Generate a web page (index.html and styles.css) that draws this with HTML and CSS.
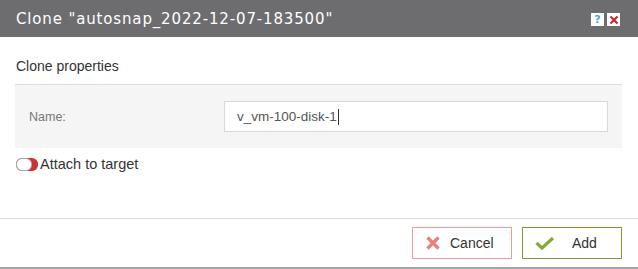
FILE: index.html
```html
<!DOCTYPE html>
<html>
<head>
<meta charset="utf-8">
<link rel="stylesheet" href="styles.css">
</head>
<body>
<div class="dialog">
  <div class="titlebar">
    <span class="title">Clone "autosnap_2022-12-07-183500"</span>
    <div class="tools">
      <span class="tool help">?</span>
      <span class="tool close">
        <svg width="10" height="10" viewBox="0 0 10 10"><path d="M1.5 1.5 L8.5 8.5 M8.5 1.5 L1.5 8.5" stroke="#d0202a" stroke-width="2" fill="none"/></svg>
      </span>
    </div>
  </div>
  <div class="content">
    <div class="section-title">Clone properties</div>
    <div class="panel">
      <label class="field-label">Name:</label>
      <div class="input">v_vm-100-disk-1<span class="caret"></span></div>
    </div>
    <div class="toggle-row">
      <span class="toggle"><span class="knob"></span></span>
      <span class="toggle-label">Attach to target</span>
    </div>
  </div>
  <div class="footer">
    <button class="btn cancel">
      <svg width="16" height="16" viewBox="0 0 16 16"><path d="M2.5 2.5 L13.5 13.5 M13.5 2.5 L2.5 13.5" stroke="#e8807a" stroke-width="3.2" fill="none"/></svg>
      <span>Cancel</span>
    </button>
    <button class="btn add">
      <svg width="20" height="16" viewBox="0 0 20 16"><path d="M1.5 8 L7 13 L18 3" stroke="#8aa83a" stroke-width="3.2" fill="none"/></svg>
      <span class="add-text">Add</span>
    </button>
  </div>
</div>
</body>
</html>
```

FILE: styles.css
```css
html, body {
  margin: 0;
  padding: 0;
  background: #ffffff;
}
body {
  width: 638px;
  height: 269px;
  overflow: hidden;
  font-family: "Liberation Sans", Arial, sans-serif;
}
.dialog {
  width: 638px;
  height: 269px;
  display: flex;
  flex-direction: column;
  background: #ffffff;
  border-bottom: 2px solid #a5a5a5;
  box-sizing: border-box;
}
.titlebar {
  height: 37px;
  background: #6d6d70;
  display: flex;
  align-items: center;
  justify-content: space-between;
  padding: 0 16px 0 16px;
  box-sizing: border-box;
}
.title {
  color: #ffffff;
  font-family: "DejaVu Sans", sans-serif;
  font-size: 15px;
  letter-spacing: 0.85px;
  margin-top: 1px;
}
.tools {
  display: flex;
  gap: 3px;
  margin-top: 2px;
  margin-right: 2px;
}
.tool {
  width: 13px;
  height: 13px;
  background: #ffffff;
  display: flex;
  align-items: center;
  justify-content: center;
}
.help {
  color: #5aa0d0;
  font-family: "DejaVu Sans", sans-serif;
  font-weight: bold;
  font-size: 11px;
  line-height: 13px;
}
.content {
  padding: 0 16px 0 15px;
  flex: 1;
}
.section-title {
  margin-top: 22px;
  padding-left: 1px;
  font-size: 14px;
  color: #333333;
  padding-bottom: 11px;
  border-bottom: 1px solid #dcdcdc;
  line-height: 14px;
}
.panel {
  background: #f5f5f5;
  height: 63px;
  display: flex;
  align-items: center;
  padding-left: 14px;
  padding-right: 14px;
}
.field-label {
  width: 195px;
  font-size: 12.5px;
  color: #777777;
}
.input {
  flex: 1;
  height: 31px;
  box-sizing: border-box;
  border: 1px solid #d8d8d8;
  background: #ffffff;
  display: flex;
  align-items: center;
  padding-left: 12px;
  font-size: 13.5px;
  color: #555555;
}
.caret {
  display: inline-block;
  width: 1px;
  height: 16px;
  background: #333333;
  margin-left: 1px;
}
.toggle-row {
  display: flex;
  align-items: center;
  margin-top: 8px;
  padding-left: 1px;
}
.toggle {
  width: 22px;
  height: 13px;
  border-radius: 6px;
  background: #cc3333;
  position: relative;
  box-sizing: border-box;
}
.knob {
  position: absolute;
  left: 0;
  top: 0;
  width: 16px;
  height: 13px;
  border-radius: 6px;
  background: #ffffff;
  border: 1px solid #a8a8a8;
  box-sizing: border-box;
}
.toggle-label {
  margin-left: 2px;
  font-size: 14.5px;
  color: #333333;
}
.footer {
  border-top: 1px solid #dcdcdc;
  height: 49px;
  display: flex;
  justify-content: flex-end;
  align-items: flex-start;
  padding-top: 8px;
  padding-right: 16px;
  gap: 10px;
  box-sizing: border-box;
}
.btn {
  height: 32px;
  width: 100px;
  background: #ffffff;
  box-sizing: border-box;
  display: flex;
  align-items: center;
  font-family: "Liberation Sans", Arial, sans-serif;
  font-size: 14px;
  color: #333333;
  padding: 0 0 0 12px;
  gap: 9px;
}
.cancel {
  border: 1px solid #ef9a95;
}
.add {
  border: 1px solid #7f9a2a;
  gap: 0;
}
.add-text {
  margin-left: 17px;
}
```
